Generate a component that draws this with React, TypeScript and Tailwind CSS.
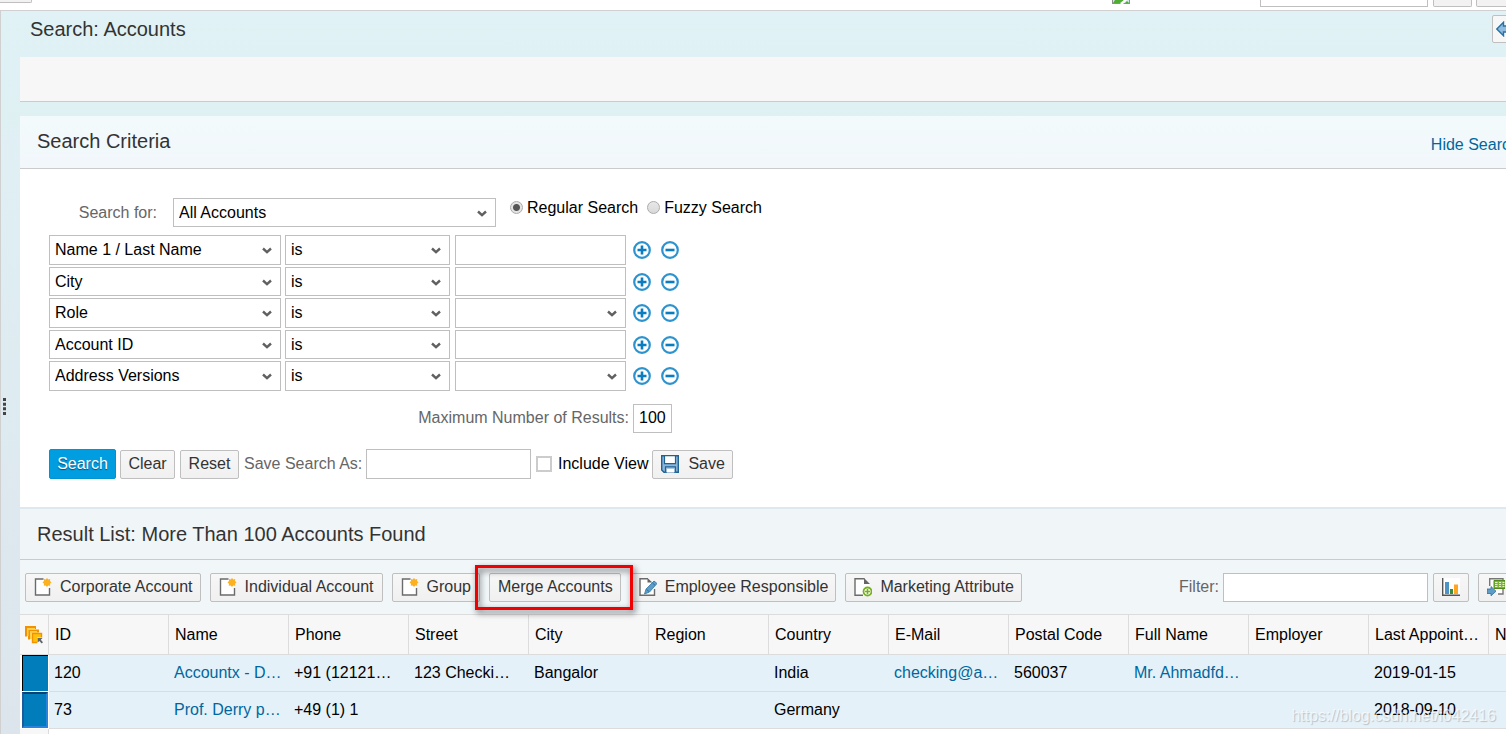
import React, { useState } from "react";

const criteria = [
  { field: "Name 1 / Last Name", list: false },
  { field: "City", list: false },
  { field: "Role", list: true },
  { field: "Account ID", list: false },
  { field: "Address Versions", list: true },
];

const columns = [
  "ID",
  "Name",
  "Phone",
  "Street",
  "City",
  "Region",
  "Country",
  "E-Mail",
  "Postal Code",
  "Full Name",
  "Employer",
  "Last Appoint…",
];

const accounts = [
  {
    cells: ["120", "Accountx - D…", "+91 (12121…", "123 Checki…", "Bangalor", "", "India", "checking@a…", "560037", "Mr. Ahmadfd…", "", "2019-01-15"],
  },
  {
    cells: ["73", "Prof. Derry p…", "+49 (1) 1", "", "", "", "Germany", "", "", "", "", "2018-09-10"],
  },
];

// name, e-mail and full name open the account
const linkColumns = [1, 7, 9];

const buttonStyle =
  "flex h-[29px] shrink-0 items-center justify-center whitespace-nowrap rounded-xs border border-[#bfbfbf] bg-linear-to-b from-[#f7f7f7] to-[#f0f0f0] px-2 text-[#333]";
const inputStyle = "h-full w-full border border-[#bfbfbf] bg-white px-[5px] text-black outline-none";

const NewIcon = () => (
  <svg width="18" height="20" viewBox="0 0 18 20" className="mr-2 shrink-0">
    <path d="M1.5 2.5H15v15.500H1.500z" fill="#fff" />
    <path d="M9.500 2H1.500V18H15.500V11" fill="none" stroke="#6b6b6b" strokeWidth="1.400" />
    <path
      d="M13 1l1.300 1.400 1.900-.3-.2 1.900L17.500 5.500 16 6.800l.2 1.900-1.900-.2L13 10l-1.300-1.500-1.900.2.2-1.900L8.500 5.500 10 4l-.2-1.900 1.900.3z"
      fill="#fbb120"
    />
  </svg>
);

const EditIcon = () => (
  <svg width="18" height="20" viewBox="0 0 18 20" className="mr-2 shrink-0">
    <path d="M1 1.500H10L15 6V18.500H1z" fill="#fff" />
    <path d="M9 1.700H1V18.300H15.500V12" fill="none" stroke="#6b6b6b" strokeWidth="1.400" />
    <path d="M8.500 1l5 4.500h-5z" fill="#666" />
    <path d="M15 4l3 2.500-7.500 8.500-5 2 1.600-5z" fill="#5b9dca" stroke="#3b7da8" strokeWidth=".9" />
    <path d="M13.500 6l2.500 2.300M7.500 12.500l2.500 2" stroke="#2c6b96" strokeWidth=".9" />
  </svg>
);

const AddPageIcon = () => (
  <svg width="18" height="20" viewBox="0 0 18 20" className="mr-2 shrink-0">
    <path d="M1 1.500H11L15.500 6V18.500H1z" fill="#fff" />
    <path d="M9 18.300H1V1.700H10.500" fill="none" stroke="#6b6b6b" strokeWidth="1.400" />
    <path d="M10 1l6 6h-6z" fill="#666" />
    <circle cx="13.500" cy="14.500" r="4" fill="#fff" stroke="#76b01c" strokeWidth="1.800" />
    <path d="M13.500 12v5M11 14.500h5" stroke="#76b01c" strokeWidth="1.600" />
  </svg>
);

const SaveIcon = () => (
  <svg width="18" height="18" viewBox="0 0 18 18" className="mr-[9px] shrink-0">
    <path d="M.7.700H17.300V17.300H3L.7 15z" fill="#8db5d8" stroke="#1f6293" strokeWidth="1.400" />
    <path d="M3.500.7h11v8h-11z" fill="#fff" stroke="#1f6293" strokeWidth="1.200" />
    <path d="M4.500 17.300v-5.500h10v5.500" fill="#a9c6df" stroke="#1f6293" strokeWidth="1.200" />
    <path d="M6 14h7v3.500H6z" fill="#fff" />
  </svg>
);

const ChartIcon = () => (
  <svg width="18" height="18" viewBox="0 0 18 18">
    <path d="M0 0h18v18H0z" fill="#fff" />
    <path d="M.7 0v17.300H18" fill="none" stroke="#555" strokeWidth="1.400" />
    <path d="M3 4h4v12H3z" fill="#4d94c4" />
    <path d="M8 11h3v5H8z" fill="#3d8b3d" />
    <path d="M12 6.500h4V16h-4z" fill="#ffa51f" />
  </svg>
);

const ExportIcon = () => (
  <svg width="18" height="18" viewBox="0 0 18 18">
    <path d="M2.700 8V.7H16V16H11" fill="#fff" stroke="#777" strokeWidth="1.400" />
    <path d="M7 2.500h11v8H7z" fill="#7cb82f" stroke="#4f8a1b" />
    <path d="M8 4.500h2.500M12 4.500h2M15.500 4.500h2M8 6.500h2.500M12 6.500h2M15.500 6.500h2M8 8.500h2.500M12 8.500h2M15.500 8.500h2" stroke="#e4f2c8" />
    <path d="M0 11h4V8.500l5 4.700-5 4.600V15.500H0z" fill="#5f9cc6" stroke="#2e709e" strokeWidth=".8" />
  </svg>
);

const BackIcon = () => (
  <svg width="18" height="16" viewBox="0 0 18 16" className="shrink-0">
    <path d="M.8 8L7.500 1.300V5H17v6H7.500v3.700z" fill="#8fbbe0" stroke="#28709f" strokeWidth="1.400" />
  </svg>
);

const SelectAllIcon = () => (
  <svg width="18" height="18" viewBox="0 0 18 18" className="ml-[5px]">
    <path d="M1 10.500V1h9v2M4 13.500V4.500h9v2" fill="none" stroke="#f39200" strokeWidth="2" />
    <path d="M2 2h8v1.500H3.500V10H2zM5 5.500h7V7H6.500v6H5z" fill="#ffd050" />
    <path d="M7.500 7.500h9v9h-9z" fill="#fdc10a" stroke="#f39200" strokeWidth="1.400" />
    <path d="M12 11.500h6V18h-6z" fill="#f7f7f7" />
    <path d="M12.500 12h5l-1.700 1.700 2.200 2.600-1.300 1.200-2.400-2.400-1.800 1.700z" fill="#666" />
  </svg>
);

const RoundIcon = ({ plus }: any) => (
  <svg width="18" height="18" viewBox="0 0 18 18">
    <circle cx="9" cy="9" r="7.800" fill="#fff" stroke="#2d93cf" strokeWidth="2.200" />
    <path d={plus ? "M4.500 9h9M9 4.500v9" : "M4.500 9h9"} stroke="#0a7cc0" strokeWidth="2.600" />
  </svg>
);

const SelectBox = ({ id, label, value, className }: any) => (
  <div className={"relative h-full shrink-0 " + className}>
    <select id={id} aria-label={label} className={inputStyle + " appearance-none"}>
      <option>{value}</option>
    </select>
    <svg width="10" height="8" viewBox="0 0 10 8" className="pointer-events-none absolute top-3 right-[9px]">
      <path d="M1 1.500l4 3.700 4-3.700" fill="none" stroke="#606060" strokeWidth="2.400" />
    </svg>
  </div>
);

const App = () => {
  const [mode, setMode] = useState("regular");
  const [max, setMax] = useState("100");
  const [includeView, setIncludeView] = useState(false);

  const radioStyle =
    "mr-1 size-[13px] shrink-0 appearance-none rounded-full border border-[#ababab] bg-linear-to-b from-[#e8e8e8] to-[#d9d9d9] checked:bg-[radial-gradient(circle,#555_3px,#e4e4e4_4px)]";

  return (
    <div className="relative h-screen overflow-hidden bg-white font-['Liberation_Sans',Arial,sans-serif] text-base leading-5 text-black">
      <div className="flex h-full w-[calc(100%+80px)] flex-col">
        <header className="flex h-2.5 shrink-0 items-start bg-white pr-[71px]">
          <button aria-label="Menu" className="h-[3px] w-8 rounded-br-xs border-r border-b border-[#bfbfbf] bg-[#f2f2f2]"></button>
          <svg width="18" height="4" viewBox="0 0 18 4" className="ml-auto">
            <path d="M0 0h18v4H0z" fill="#8d8d8d" />
            <path d="M1 0h16v3H1z" fill="#d7e5ef" />
            <path d="M1 3l2-3h9L8 3z" fill="#4fae32" />
            <path d="M13 3l2-2 2 2z" fill="#4fae32" />
            <path d="M8 4l4-4h3l-4 4z" fill="#fff" />
          </svg>
          <input aria-label="Quick search" className="ml-[130px] h-[7px] w-[168px] border border-t-0 border-[#bfbfbf] bg-white" />
          <button aria-label="Go" className="ml-[5px] h-[7px] w-[39px] rounded-b-xs border border-t-0 border-[#bfbfbf] bg-[#f2f2f2]"></button>
          <button aria-label="Advanced" className="ml-1 h-[7px] w-[39px] rounded-b-xs border border-t-0 border-[#bfbfbf] bg-[#f2f2f2]"></button>
        </header>

        <div className="flex min-h-0 flex-1 border-t border-l border-[#d0d0d0] bg-linear-to-b from-[#e0f2f5] to-[#dce5ec]">
          <div className="flex w-[19px] shrink-0 flex-col pt-[387px] pl-0.5">
            <svg width="3" height="17" viewBox="0 0 3 17">
              <path d="M0 0h3v3H0zM0 4.700h3v3H0zM0 9.300h3v3H0zM0 14h3v3H0z" fill="#444" />
            </svg>
          </div>

          <main className="min-w-0 flex-1">
            <div className="flex h-[46px] items-start justify-between pl-2.5">
              <h1 className="pt-2 text-xl leading-5 text-[#333]">Search: Accounts</h1>
              <button aria-label="Back" className="mt-1 mr-[60px] flex h-7 w-[34px] items-center rounded-xs border border-[#bfbfbf] bg-[#f7f7f7] pl-[3px]">
                <BackIcon />
              </button>
            </div>
            <div className="h-[45px] border-b border-[#c8cccd] bg-[#f7f7f7]"></div>

            <section className="mt-3.5 bg-white">
              <div className="flex h-[53px] items-center justify-between border-b border-[#cbcbcb] bg-linear-to-b from-[#f3fafc] to-[#f1f7fa] pr-5 pb-0.5 pl-[17px]">
                <h2 className="text-xl leading-6 text-[#333]">Search Criteria</h2>
                <a href="#" className="pt-2 text-[#00679e]">
                  Hide Search Fields
                </a>
              </div>

              <form onSubmit={(e) => e.preventDefault()} className="h-[338px] pt-[29px] pl-[29px]">
                <div className="flex h-[29px] items-center">
                  <label htmlFor="searchFor" className="w-[124px] pr-4 text-right text-[#666]">
                    Search for:
                  </label>
                  <SelectBox id="searchFor" value="All Accounts" className="w-[323px]" />
                  <label className="ml-3.5 flex items-center pb-2.5">
                    <input type="radio" name="mode" checked={mode === "regular"} onChange={() => setMode("regular")} className={radioStyle} />
                    Regular Search
                  </label>
                  <label className="ml-[9px] flex items-center pb-2.5">
                    <input type="radio" name="mode" checked={mode === "fuzzy"} onChange={() => setMode("fuzzy")} className={radioStyle} />
                    Fuzzy Search
                  </label>
                </div>

                <div className="mt-2 flex flex-col gap-0.5">
                  {criteria.map((item) => (
                    <div key={item.field} className="flex items-center odd:h-[30px] even:h-[29px]">
                      <SelectBox label="Field" value={item.field} className="w-[232px]" />
                      <SelectBox label={item.field + " operator"} value="is" className="ml-1 w-[165px]" />
                      {item.list ? (
                        <SelectBox label={item.field + " value"} value="" className="ml-[5px] w-[171px]" />
                      ) : (
                        <div className="ml-[5px] h-full w-[171px]">
                          <input aria-label={item.field + " value"} className={inputStyle} />
                        </div>
                      )}
                      <button aria-label="Add row" className="ml-[7px]">
                        <RoundIcon plus />
                      </button>
                      <button aria-label="Remove row" className="ml-2.5">
                        <RoundIcon />
                      </button>
                    </div>
                  ))}
                </div>

                <div className="mt-[13px] flex h-[29px] items-center">
                  <label htmlFor="max" className="w-[584px] pr-1 pb-0.5 text-right text-[#666]">
                    Maximum Number of Results:
                  </label>
                  <div className="h-full w-[39px]">
                    <input id="max" value={max} onChange={(e) => setMax(e.target.value)} className={inputStyle + " pb-0.5"} />
                  </div>
                </div>

                <div className="mt-4 flex h-[30px] items-center">
                  <button className="h-full w-[67px] rounded-xs border border-[#0092d1] bg-[#009de0] text-white [text-shadow:0_1px_1px_#00507a]">
                    Search
                  </button>
                  <button className={buttonStyle + " ml-1 w-[55px]"}>Clear</button>
                  <button className={buttonStyle + " ml-[5px] w-[59px]"}>Reset</button>
                  <label htmlFor="saveAs" className="w-[127px] shrink-0 pl-[5px] whitespace-nowrap text-[#666]">
                    Save Search As:
                  </label>
                  <div className="h-full w-[165px]">
                    <input id="saveAs" className={inputStyle} />
                  </div>
                  <label className="ml-[5px] flex items-center">
                    <input
                      type="checkbox"
                      checked={includeView}
                      onChange={() => setIncludeView(!includeView)}
                      className="mr-1.5 size-4 appearance-none border-2 border-[#ccc] bg-white checked:bg-[#009de0]"
                    />
                    Include View
                  </label>
                  <button className={buttonStyle + " ml-1 pr-[7px]"}>
                    <SaveIcon />
                    Save
                  </button>
                </div>
              </form>
            </section>

            <section className="mt-0.5 bg-white">
              <div className="flex h-[51px] items-center border-b border-[#cbcbcb] bg-[#f0f5f8] pl-[17px]">
                <h2 className="text-xl leading-6 text-[#333]">Result List: More Than 100 Accounts Found</h2>
              </div>

              <div className="flex h-[55px] items-center gap-[9px] border-b border-[#dcdcdc] bg-[#f1f6f9] pr-[72px] pl-[5px]">
                <button className={buttonStyle + " pr-[7px]"}>
                  <NewIcon />
                  Corporate Account
                </button>
                <button className={buttonStyle}>
                  <NewIcon />
                  Individual Account
                </button>
                <button className={buttonStyle}>
                  <NewIcon />
                  Group
                </button>
                <div className="relative shrink-0">
                  <button className={buttonStyle + " pr-[7px]"}>Merge Accounts</button>
                  <div className="pointer-events-none absolute -top-2 -right-3 -bottom-2 -left-3.5 z-10 border-3 border-[#f00000] drop-shadow-[2px_3px_3px_rgba(0,0,0,0.6)]"></div>
                </div>
                <button className={buttonStyle + " pr-[7px]"}>
                  <EditIcon />
                  Employee Responsible
                </button>
                <button className={buttonStyle + " pr-[7px]"}>
                  <AddPageIcon />
                  Marketing Attribute
                </button>
                <div className="ml-auto flex items-center">
                  <label htmlFor="filter" className="pr-1 text-[#666]">
                    Filter:
                  </label>
                  <div className="h-[29px] w-[205px]">
                    <input id="filter" className={inputStyle} />
                  </div>
                  <button aria-label="Chart" className={buttonStyle + " ml-[5px]"}>
                    <ChartIcon />
                  </button>
                  <button aria-label="Export" className={buttonStyle + " ml-[9px]"}>
                    <ExportIcon />
                  </button>
                </div>
              </div>

              <table className="w-full table-fixed border-separate border-spacing-0 text-left">
                <thead className="bg-[#f7f7f7]">
                  <tr className="h-10">
                    <th className="w-[29px] border-r border-b border-[#dcdcdc] p-0">
                      <button aria-label="Select all" className="flex">
                        <SelectAllIcon />
                      </button>
                    </th>
                    {columns.map((name) => (
                      <th key={name} className="w-[120px] truncate border-r border-b border-[#dcdcdc] p-0 pl-1.5 font-normal">
                        {name}
                      </th>
                    ))}
                    <th className="truncate border-b border-[#dcdcdc] p-0 pl-1.5 font-normal">Next App…</th>
                  </tr>
                </thead>
                <tbody>
                  {accounts.map((account, i) => (
                    <tr key={i} className="h-[37px] bg-[#e4f1f9]">
                      <td className="border-b border-white bg-white p-0 pl-0.5">
                        <button
                          aria-label={"Select " + account.cells[0]}
                          className={
                            i === 1
                              ? "block h-9 w-[26px] border-2 border-[#2a84dd] border-t-[#10406e] border-l-[#1c5c9c] bg-[#007dba]"
                              : "block h-9 w-[26px] border-t border-l border-black bg-[#007dba]"
                          }
                        ></button>
                      </td>
                      {account.cells.map((cell, j) => (
                        <td key={j} className="whitespace-nowrap border-b border-[#dcdcdc] p-0 pl-[5px]">
                          {linkColumns.includes(j) && cell ? (
                            <a href="#" className="text-[#00679e]">
                              {cell}
                            </a>
                          ) : (
                            cell
                          )}
                        </td>
                      ))}
                      <td className="border-b border-[#dcdcdc] p-0"></td>
                    </tr>
                  ))}
                  <tr className="h-[37px]">
                    <td className="border-r border-[#dcdcdc] bg-[#f7f7f7] p-0"></td>
                    <td colSpan={13}></td>
                  </tr>
                </tbody>
              </table>
            </section>
          </main>
        </div>
      </div>

      <div className="pointer-events-none absolute right-2.5 bottom-1.5 text-base text-white/70 [text-shadow:1px_1px_1px_rgba(0,0,0,0.2)]">
        https://blog.csdn.net/i042416
      </div>
    </div>
  );
};

export default App;
